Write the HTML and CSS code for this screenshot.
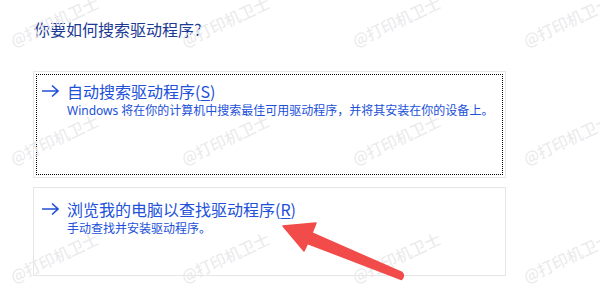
FILE: index.html
```html
<!DOCTYPE html>
<html lang="zh-CN">
<head>
<meta charset="utf-8">
<link rel="stylesheet" href="styles.css">
</head>
<body>
<main class="page">
  <h1 class="heading">你要如何搜索驱动程序?</h1>
  <div class="options">
    <div class="card">
      <div class="card-inner focused">
        <svg class="arrow" width="18" height="14" viewBox="0 0 18 14"><path d="M1 7H17M11 1.5L17 7L11 12.5" fill="none" stroke="#2150d9" stroke-width="1.6"/></svg>
        <div class="title">自动搜索驱动程序(<u>S</u>)</div>
        <div class="desc">Windows 将在你的计算机中搜索最佳可用驱动程序，并将其安装在你的设备上。</div>
      </div>
    </div>
    <div class="card">
      <div class="card-inner second">
        <svg class="arrow" width="18" height="14" viewBox="0 0 18 14"><path d="M1 7H17M11 1.5L17 7L11 12.5" fill="none" stroke="#2150d9" stroke-width="1.6"/></svg>
        <div class="title">浏览我的电脑以查找驱动程序(<u>R</u>)</div>
        <div class="desc">手动查找并安装驱动程序。</div>
      </div>
    </div>
  </div>
</main>
<div class="watermarks">
  <span>@打印机卫士</span><span>@打印机卫士</span><span>@打印机卫士</span><span>@打印机卫士</span>
  <span>@打印机卫士</span><span>@打印机卫士</span><span>@打印机卫士</span><span>@打印机卫士</span>
  <span>@打印机卫士</span><span>@打印机卫士</span><span>@打印机卫士</span><span>@打印机卫士</span>
</div>
<svg class="annotation" width="600" height="299" viewBox="0 0 600 299">
  <path d="M283 226 L316 223 L312 233 L402 272.5 Q405 275.5 401.5 279.5 L307.5 243.5 L304 251 Z" fill="#f14c4a" stroke="#f14c4a" stroke-width="1.5" stroke-linejoin="round"/>
</svg>
</body>
</html>
```

FILE: styles.css
```css
html, body {
  margin: 0;
  padding: 0;
  background: #ffffff;
}

body {
  width: 600px;
  height: 299px;
  overflow: hidden;
  position: relative;
  font-family: "Noto Sans", "Noto Sans CJK SC", sans-serif;
}

.page {
  padding: 18px 0 0 33px;
}

.heading {
  margin: 0 0 31px 1px;
  font-family: "Noto Sans CJK SC", sans-serif;
  font-weight: 400;
  font-size: 16px;
  line-height: 22px;
  color: #1c3a94;
}

.options {
  display: flex;
  flex-direction: column;
  gap: 9px;
  width: 473px;
}

.card {
  border: 1px solid #e6e6e6;
  padding: 2px;
  background: #fff;
}

.card-inner {
  border: 1px dotted transparent;
  display: grid;
  grid-template-columns: 18px 1fr;
  column-gap: 8px;
  padding: 6px 0 0 4px;
  height: 99px;
  box-sizing: border-box;
  align-content: start;
  color: #2150d9;
}

.card-inner.focused {
  border: 1px dotted #000;
  height: 101px;
}

.card-inner.second {
  padding-top: 8px;
  height: 83px;
}

.arrow {
  grid-column: 1;
  grid-row: 1;
  align-self: center;
}

.title {
  grid-column: 2;
  grid-row: 1;
  font-family: "Noto Sans CJK SC", sans-serif;
  font-size: 16px;
  line-height: 20px;
}

.title u {
  text-underline-offset: 2px;
}

.desc {
  grid-column: 2;
  grid-row: 2;
  font-family: "Noto Sans", "Noto Sans CJK SC", sans-serif;
  font-size: 12px;
  line-height: 18px;
  margin-top: 1px;
}

.watermarks {
  position: absolute;
  inset: 0;
  pointer-events: none;
  display: grid;
  grid-template-columns: repeat(4, 171px);
  grid-auto-rows: 118px;
  padding: 31px 0 0 11px;
  overflow: hidden;
}

.watermarks span {
  display: block;
  font-family: "Noto Sans CJK SC", sans-serif;
  font-size: 16px;
  line-height: 20px;
  color: #e9e9eb;
  white-space: nowrap;
  transform: rotate(-25deg);
  transform-origin: 0 50%;
  align-self: start;
  justify-self: start;
}

.annotation {
  position: absolute;
  left: 0;
  top: 0;
  pointer-events: none;
}
```
